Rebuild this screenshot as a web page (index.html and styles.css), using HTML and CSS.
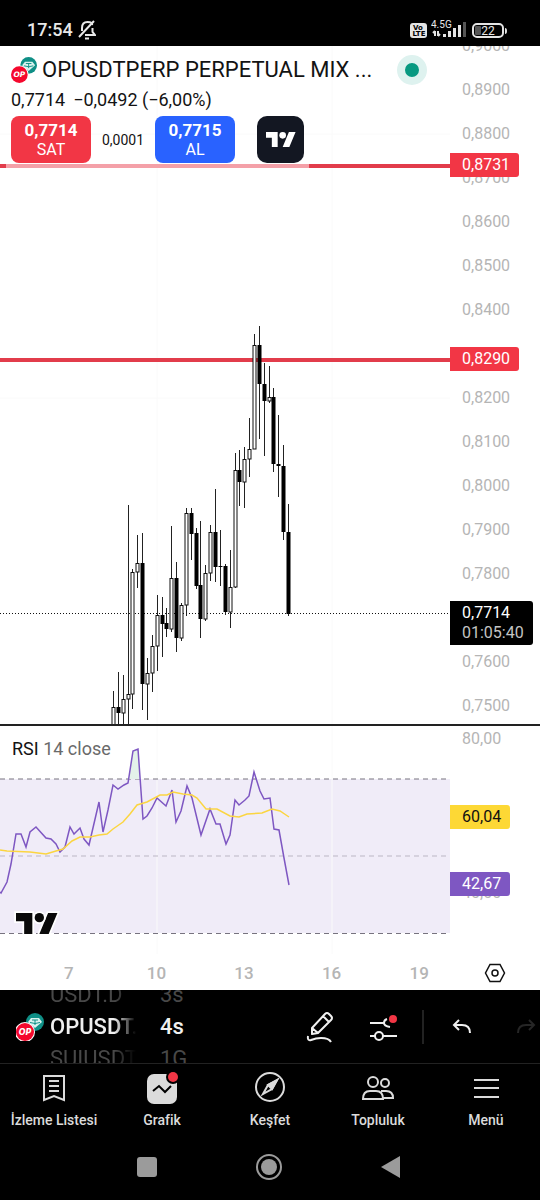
FILE: index.html
```html
<!DOCTYPE html>
<html lang="tr">
<head>
    <meta charset="UTF-8">
    <meta name="viewport" content="width=device-width, initial-scale=1.0">
    <title>OPUSDTPERP - Grafik</title>
    <link rel="stylesheet" href="styles.css">
</head>
<body>
    <!-- shared icons -->
    <svg class="sprite" aria-hidden="true">
        <symbol id="coins" viewBox="0 0 28 28">
            <circle cx="19" cy="9" r="9" fill="#0f8f86"/>
            <path d="M15 5h8l3 4-7 6-7-6z" fill="#d9f3ef"/>
            <path d="M16 7h6M19 7v5M14 9.5q5 2 10 0" fill="none" stroke="#0f8f86" stroke-width="1"/>
            <circle class="coin-ring" cx="9" cy="19" r="10"/>
            <circle cx="9" cy="19" r="9" fill="#f5082d"/>
            <text x="9" y="22" text-anchor="middle" class="coin-text">OP</text>
        </symbol>
        <symbol id="tv" viewBox="0 0 36 18" overflow="visible">
            <path d="M14 18H7V7H0V0h14zM28 18h-8l7.500-18h8z"/>
            <circle cx="20" cy="4" r="4"/>
        </symbol>
    </svg>

    <header class="status-bar">
        <span class="clock">17:54</span>
        <svg class="bell" viewBox="0 0 18 20" width="18" height="20" fill="none" stroke="#e8e8e8" stroke-width="2">
            <path d="M4 11V8q0-6 5.500-6T14 5M14.500 8v4l2.500 3H7"/>
            <path d="M1 17L16 1M7 18.500h4"/>
        </svg>
        <div class="status-right">
            <svg viewBox="0 0 18 16" width="18" height="16">
                <rect width="17" height="15" x="0" y="0" rx="3" fill="#e4e4e4"/>
                <text x="8" y="7" class="volte">Vo</text>
                <text x="9" y="13" class="volte">LTE</text>
            </svg>
            <svg viewBox="0 0 38 20" width="38" height="20">
                <text x="0" y="9" class="net">4.5G</text>
                <path d="M4 12v5M2 14l2-2M7 12v5M9 15l-2 2" fill="none" stroke="#e4e4e4" stroke-width="2"/>
                <path d="M12 15h3v3h-3zM17 12h3v6h-3zM22 9h3v9h-3zM27 6h3v12h-3z" fill="#e4e4e4"/>
                <path d="M32 3h3v15h-3z" fill="#555"/>
            </svg>
            <svg viewBox="0 0 36 16" width="36" height="16">
                <rect x="1" y="1" width="30" height="13" rx="4" fill="none" stroke="#e4e4e4" stroke-width="2"/>
                <rect x="3" y="3" width="6" height="9" rx="1" fill="#555"/>
                <path d="M33 5q2 0 2 3t-2 3z" fill="#e4e4e4"/>
                <text x="16" y="12" class="battery">22</text>
            </svg>
        </div>
    </header>

    <main class="chart">
        <section class="pane price-pane">
            <svg class="plot" id="price-plot" viewBox="0 46 450 678" preserveAspectRatio="none">
                <path class="grid" d="M157 46v678M332 46v678M0 134h450M0 398h450"/>
                <path class="level" d="M0 166h450M0 360h450"/>
                <path class="level faded" d="M6 166h303"/>
                <path class="last-price" d="M0 613.500h450"/>
                <g id="candles"></g>
            </svg>
            <div class="axis">
                <ul class="scale">
                    <li>0,9000</li>
                    <li>0,8900</li>
                    <li>0,8800</li>
                    <li>0,8700</li>
                    <li>0,8600</li>
                    <li>0,8500</li>
                    <li>0,8400</li>
                    <li></li>
                    <li>0,8200</li>
                    <li>0,8100</li>
                    <li>0,8000</li>
                    <li>0,7900</li>
                    <li>0,7800</li>
                    <li></li>
                    <li>0,7600</li>
                    <li>0,7500</li>
                </ul>
                <span class="tag tag-red tag-first">0,8731</span>
                <span class="tag tag-red tag-second">0,8290</span>
                <span class="tag tag-last">0,7714<br><small>01:05:40</small></span>
            </div>

            <div class="legend">
                <div class="title-row">
                    <svg class="coins" width="26" height="26"><use href="#coins"/></svg>
                    <h1>OPUSDTPERP PERPETUAL MIX ...</h1>
                    <span class="market-open"></span>
                </div>
                <p class="change"><span>0,7714</span><span>−0,0492 (−6,00%)</span></p>
                <div class="trade">
                    <button type="button" class="sell"><b>0,7714</b>SAT</button>
                    <span class="spread">0,0001</span>
                    <button type="button" class="buy"><b>0,7715</b>AL</button>
                    <button type="button" class="broker" aria-label="TradingView">
                        <svg width="30" height="15" fill="#fff"><use href="#tv"/></svg>
                    </button>
                </div>
            </div>
        </section>

        <section class="pane rsi-pane">
            <svg class="plot" viewBox="0 726 450 228" preserveAspectRatio="none">
                <rect x="0" y="779" width="450" height="154" fill="#f0ecf8"/>
                <path class="grid" d="M157 726v228M332 726v228"/>
                <path class="band" d="M0 779h450M0 933.500h450"/>
                <path class="band middle" d="M0 856h450"/>
                <path d="M129 779L133 751L138 749L140 779z" fill="#e4f2ea"/>
                <polyline class="rsi" points="0,892 1,893 7,882 11,864 16,834 21,834 26,847 30,832 36,827 46,838 51,839 56,844 60,852 65,847 70,827 74,834 80,828 84,839 89,845 99,802 103,832 108,810 113,785 118,789 124,785 128,783 133,751 138,749 143,819 147,816 152,808 157,798 166,806 172,790 176,822 181,811 187,786 192,798 201,835 210,809 216,824 220,824 226,844 230,835 235,800 239,805 245,800 249,796 254,772 260,791 264,799 270,798 274,829 279,830 284,858 289,885"/>
                <polyline class="rsi-ma" points="0,850 7,851 30,852 46,854 56,851 63,849 72,841 80,837 90,837 99,835 107,834 113,829 123,822 130,814 137,805 147,802 160,795 167,795 173,792 183,794 192,795 197,798 206,809 217,809 230,816 239,817 247,814 262,813 272,809 280,811 289,817"/>
                <use class="watermark" href="#tv" x="16" y="913" width="42" height="21"/>
            </svg>
            <div class="axis">
                <span class="scale-label top">80,00</span>
                <span class="scale-label bottom">40,00</span>
                <span class="tag tag-yellow">60,04</span>
                <span class="tag tag-purple">42,67</span>
            </div>
            <p class="legend rsi-legend">RSI <span>14 close</span></p>
        </section>

        <div class="time-axis">
            <span>7</span>
            <span>10</span>
            <span>13</span>
            <span>16</span>
            <span>19</span>
            <button type="button" aria-label="Ayarlar">
                <svg width="22" height="20" viewBox="0 0 22 20" fill="none" stroke="#111" stroke-width="1.500">
                    <path d="M6 1.500h10L20.500 10 16 18.500H6L1.500 10z"/>
                    <circle cx="11" cy="10" r="3"/>
                </svg>
            </button>
        </div>
    </main>

    <div class="toolbar">
        <svg class="coins dark" width="28" height="28"><use href="#coins"/></svg>
        <ul class="wheel symbols">
            <li>USDT.D</li>
            <li class="current">OPUSDT.P</li>
            <li>SUIUSDT</li>
        </ul>
        <ul class="wheel intervals">
            <li>3s</li>
            <li class="current">4s</li>
            <li>1G</li>
        </ul>
        <div class="tools">
            <button type="button" aria-label="Çizim">
                <svg width="28" height="32" viewBox="0 0 28 32" fill="none" stroke="#f0f0f0" stroke-width="2" stroke-linejoin="round">
                    <path d="M6 17L19 3q2-2 4 0l2 2q2 2 0 4L12 22l-6 1zM17 5l6 6M6 17l6 5"/>
                    <path d="M2 25q-1 5 3 4 5-2 10-2 8 0 10 4"/>
                </svg>
            </button>
            <button type="button" aria-label="Göstergeler">
                <svg width="30" height="30" viewBox="0 0 30 30" fill="none" stroke="#f0f0f0" stroke-width="2">
                    <path d="M1 11h14M18 7q-3 1-3 4t6 4M1 24h5M14 24h14"/>
                    <circle cx="10" cy="24" r="4"/>
                    <circle cx="24" cy="7" r="4" fill="#f23645" stroke="none"/>
                </svg>
            </button>
            <span class="separator"></span>
            <button type="button" aria-label="Geri al">
                <svg width="20" height="16" viewBox="0 0 20 16" fill="none" stroke="#f0f0f0" stroke-width="2">
                    <path d="M7 1L2 6l5 5M2 6h8q8 0 8 8"/>
                </svg>
            </button>
            <button type="button" class="redo" aria-label="Yinele" disabled>
                <svg width="20" height="16" viewBox="0 0 20 16" fill="none" stroke="#262626" stroke-width="2">
                    <path d="M13 1l5 5-5 5M18 6h-8q-8 0-8 8"/>
                </svg>
            </button>
        </div>
    </div>

    <nav class="tabs">
        <a href="#watchlist">
            <svg width="32" height="32" viewBox="0 0 32 32" fill="none" stroke="#dbdbdb" stroke-width="2">
                <path d="M6 4h20v24l-10-4-10 4z"/>
                <path d="M11 9h10M11 14h10M11 19h10"/>
            </svg>
            İzleme Listesi
        </a>
        <a href="#chart">
            <svg width="32" height="32" viewBox="0 0 32 32">
                <rect x="1" y="2" width="30" height="30" rx="7" fill="#dbdbdb"/>
                <path d="M7 19l6-5 6 6 6-6" fill="none" stroke="#000" stroke-width="2"/>
                <circle cx="27" cy="5" r="7"/>
                <circle cx="27" cy="5" r="5" fill="#f23645"/>
            </svg>
            Grafik
        </a>
        <a href="#explore">
            <svg width="32" height="32" viewBox="0 0 32 32" fill="none" stroke="#dbdbdb" stroke-width="2">
                <circle cx="16" cy="15" r="14"/>
                <path d="M23 8l-9 5-5 9 9-5z"/>
                <path d="M23 8l-9 5 4 4z" fill="#dbdbdb"/>
            </svg>
            Keşfet
        </a>
        <a href="#community">
            <svg width="32" height="32" viewBox="0 0 32 32" fill="none" stroke="#dbdbdb" stroke-width="2">
                <circle cx="11" cy="10" r="5"/>
                <circle cx="23" cy="11" r="4"/>
                <path d="M1 27q0-8 7-8h6q7 0 7 8zM19 19h5q7 0 7 7H21"/>
            </svg>
            Topluluk
        </a>
        <a href="#menu">
            <svg width="32" height="32" viewBox="0 0 32 32" fill="none" stroke="#dbdbdb" stroke-width="2">
                <path d="M4 8h25M4 16h25M4 25h25"/>
            </svg>
            Menü
        </a>
    </nav>

    <footer class="system-nav">
        <button type="button" aria-label="Son uygulamalar">
            <svg width="28" height="28" viewBox="0 0 28 28"><rect x="4" y="4" width="20" height="20" rx="3" fill="#9b9b9b"/></svg>
        </button>
        <button type="button" aria-label="Ana ekran">
            <svg width="28" height="28" viewBox="0 0 28 28">
                <circle cx="14" cy="14" r="12" fill="none" stroke="#9b9b9b" stroke-width="2"/>
                <circle cx="14" cy="14" r="8" fill="#9b9b9b"/>
            </svg>
        </button>
        <button type="button" aria-label="Geri">
            <svg width="28" height="28" viewBox="0 0 28 28"><path d="M23 3v22L4 14z" fill="#9b9b9b"/></svg>
        </button>
    </footer>

    <script src="script.js"></script>
</body>
</html>
```
FILE: styles.css
```css
/* Reset */
* {
    margin: 0;
    padding: 0;
    box-sizing: border-box;
}

body {
    min-height: 100vh;
    background-color: #000;
    color: #131313;
    font-family: Roboto, "Liberation Sans", sans-serif;
    font-size: 18px;
    line-height: 20px;
}

ul {
    list-style: none;
}

button {
    border: none;
    background: none;
    color: inherit;
    font: inherit;
    cursor: pointer;
}

svg {
    display: block;
    flex: none;
}

.sprite {
    position: absolute;
    width: 0;
    height: 0;
}

.coin-text {
    fill: #fff;
    font: italic bold 8px "DejaVu Sans", sans-serif;
}

.coin-ring {
    fill: #fff;
}

/* Status bar */
.status-bar {
    display: flex;
    align-items: flex-end;
    gap: 5px;
    height: 46px;
    padding: 0 32px 6px 27px;
    color: #e8e8e8;
}

.clock {
    font-size: 18px;
    font-weight: 500;
}

.status-right {
    display: flex;
    align-items: flex-end;
    gap: 3px;
    margin-left: auto;
    padding-bottom: 1px;
}

.volte {
    font: bold 7px "DejaVu Sans", sans-serif;
    text-anchor: middle;
}

.net {
    fill: #e8e8e8;
    font-size: 10px;
}

.battery {
    fill: #e8e8e8;
    font-size: 12px;
    text-anchor: middle;
}

/* Chart */
.chart {
    background-color: #fff;
}

.pane {
    display: flex;
    position: relative;
    overflow: hidden;
}

.price-pane {
    height: 680px;
    border-bottom: 2px solid #222;
}

.rsi-pane {
    height: 228px;
}

.plot {
    flex: 1;
    min-width: 0;
    height: 100%;
}

.grid {
    stroke: #fafafa;
}

.level {
    stroke: #e23c4b;
    stroke-width: 4;
}

.level.faded {
    stroke: #f4a0a8;
}

.last-price {
    stroke: #111;
    stroke-dasharray: 1 2;
}

.wick {
    stroke: #222;
}

.up {
    fill: #fff;
    stroke: #111;
}

.down {
    fill: #000;
}

.band {
    stroke: #77737f;
    stroke-dasharray: 5 4;
}

.band.middle {
    stroke: #bbb6c4;
}

.rsi,
.rsi-ma {
    fill: none;
    stroke: #7e57c2;
    stroke-width: 1.5;
}

.rsi-ma {
    stroke: #fbd541;
}

.watermark {
    fill: #0a0a0a;
    stroke: #fff;
    stroke-width: 3;
    paint-order: stroke;
}

/* Price scale */
.axis {
    position: relative;
    width: 90px;
    color: #b5b5b5;
    font-size: 16px;
}

.scale {
    margin-top: -22px;
}

.scale li {
    height: 44px;
    padding-left: 12px;
    line-height: 44px;
}

.scale-label,
.tag {
    position: absolute;
    left: 0;
    padding: 2px 9px 2px 12px;
}

.scale-label.top {
    top: 1px;
}

.scale-label.bottom {
    top: 155px;
}

.tag {
    border-radius: 0 3px 3px 0;
    color: #fff;
}

.tag small {
    color: #c4c4c4;
    font-size: 16px;
}

.tag-red {
    background-color: #f23645;
}

.tag-first {
    top: 107px;
}

.tag-second {
    top: 301px;
}

.tag-last {
    top: 555px;
    background-color: #000;
}

.tag-yellow {
    top: 79px;
    background-color: #fdd835;
    color: #111;
}

.tag-purple {
    top: 146px;
    background-color: #7e57c2;
}

/* Legend over the chart */
.legend {
    position: absolute;
    top: 0;
    left: 0;
    padding: 8px 0 0 11px;
}

.title-row {
    display: flex;
    align-items: center;
    height: 32px;
}

h1 {
    margin-left: 5px;
    font-size: 22px;
    font-weight: 400;
    white-space: nowrap;
}

.market-open {
    width: 30px;
    height: 30px;
    margin-left: 25px;
    border: 8px solid #def2ef;
    border-radius: 50%;
    background-color: #089981;
}

.change {
    display: flex;
    gap: 8px;
    margin: 4px 0 6px;
}

.trade {
    display: flex;
    align-items: center;
}

.trade button {
    width: 80px;
    height: 47px;
    border-radius: 8px;
    color: #fff;
    font-size: 16px;
    line-height: 19px;
}

.trade b {
    display: block;
    font-size: 17px;
    font-weight: 700;
}

.trade .sell {
    background-color: #f23645;
}

.trade .buy {
    background-color: #2962ff;
}

.trade .broker {
    display: flex;
    align-items: center;
    justify-content: center;
    width: 47px;
    margin-left: 22px;
    border-radius: 10px;
    background-color: #131722;
}

.spread {
    width: 64px;
    font-size: 14px;
    text-align: center;
}

.rsi-legend {
    padding: 13px 0 0 12px;
}

.rsi-legend span {
    color: #6a6a6a;
}

/* Time axis */
.time-axis {
    display: flex;
    align-items: center;
    height: 36px;
    padding: 2px 13px 0 25px;
    color: #b5b5b5;
    font-size: 17px;
    font-weight: 500;
    text-align: center;
}

.time-axis span {
    flex: 1;
}

.time-axis button {
    display: flex;
    justify-content: center;
    width: 64px;
}

/* Toolbar */
.toolbar {
    display: flex;
    align-items: center;
    height: 74px;
    padding-left: 16px;
    border-bottom: 1px solid #222;
    overflow: hidden;
}

.dark .coin-ring {
    fill: #000;
}

.wheel {
    height: 96px;
    color: #484848;
    font-size: 22px;
    line-height: 32px;
}

.wheel .current {
    color: #f0f0f0;
    font-weight: 500;
}

.symbols {
    width: 86px;
    margin-left: 6px;
    overflow: hidden;
    mask-image: linear-gradient(to right, #000 75%, transparent);
}

.intervals {
    margin-left: 24px;
}

.tools {
    display: flex;
    align-items: center;
    margin-right: -18px;
    margin-left: auto;
}

.tools button {
    display: flex;
    justify-content: center;
    width: 64px;
}

.separator {
    width: 2px;
    height: 34px;
    margin: 0 6px;
    background-color: #222;
}

/* Bottom tabs */
.tabs {
    display: grid;
    grid-template-columns: repeat(5, 1fr);
    padding: 8px 0 6px;
}

.tabs a {
    display: flex;
    flex-direction: column;
    align-items: center;
    gap: 6px;
    color: #dbdbdb;
    font-size: 14px;
    font-weight: 500;
    text-decoration: none;
}

/* System navigation */
.system-nav {
    display: flex;
    justify-content: center;
    gap: 94px;
    padding: 17px 3px 17px 0;
}
```
FILE: script.js
```js
// one candle per row: high, body top, body bottom, low, direction
const candles = [
    [691, 707, 725, 725, 'up'],
    [672, 707, 713, 725, 'down'],
    [675, 699, 713, 725, 'up'],
    [505, 694, 699, 725, 'up'],
    [569, 572, 694, 709, 'up'],
    [535, 563, 572, 588, 'up'],
    [533, 563, 684, 710, 'down'],
    [658, 673, 684, 720, 'up'],
    [635, 646, 673, 692, 'up'],
    [595, 615, 646, 671, 'up'],
    [597, 615, 624, 657, 'down'],
    [608, 623, 629, 637, 'down'],
    [526, 578, 629, 632, 'up'],
    [562, 578, 638, 652, 'down'],
    [603, 605, 638, 641, 'up'],
    [508, 513, 605, 616, 'up'],
    [508, 513, 534, 560, 'down'],
    [528, 533, 586, 589, 'down'],
    [521, 585, 619, 638, 'down'],
    [565, 573, 619, 621, 'up'],
    [525, 532, 573, 581, 'up'],
    [489, 532, 567, 582, 'down'],
    [530, 566, 567, 586, 'down'],
    [564, 566, 612, 615, 'down'],
    [550, 587, 612, 628, 'up'],
    [453, 470, 587, 588, 'up'],
    [450, 470, 482, 506, 'down'],
    [447, 459, 482, 508, 'up'],
    [418, 449, 459, 477, 'up'],
    [334, 345, 449, 449, 'up'],
    [326, 345, 384, 439, 'down'],
    [363, 384, 401, 456, 'down'],
    [366, 397, 401, 403, 'up'],
    [388, 397, 464, 472, 'down'],
    [415, 464, 466, 497, 'down'],
    [445, 466, 532, 540, 'down'],
    [504, 532, 614, 616, 'down']
];

const firstX = 113;
const step = 4.86;
let markup = '';

candles.forEach(([high, top, bottom, low, direction], i) => {
    const x = Math.round(firstX + i * step);
    markup += `<path class="wick" d="M${x + 0.5} ${high}V${low}"/>`;
    if (direction === 'up') {
        markup += `<rect class="up" x="${x - 1}" y="${top + 0.5}" width="3" height="${bottom - top - 0.5}"/>`;
    } else {
        markup += `<rect class="down" x="${x - 1.5}" y="${top}" width="4" height="${bottom - top}"/>`;
    }
});

document.getElementById('candles').innerHTML = markup;
```
